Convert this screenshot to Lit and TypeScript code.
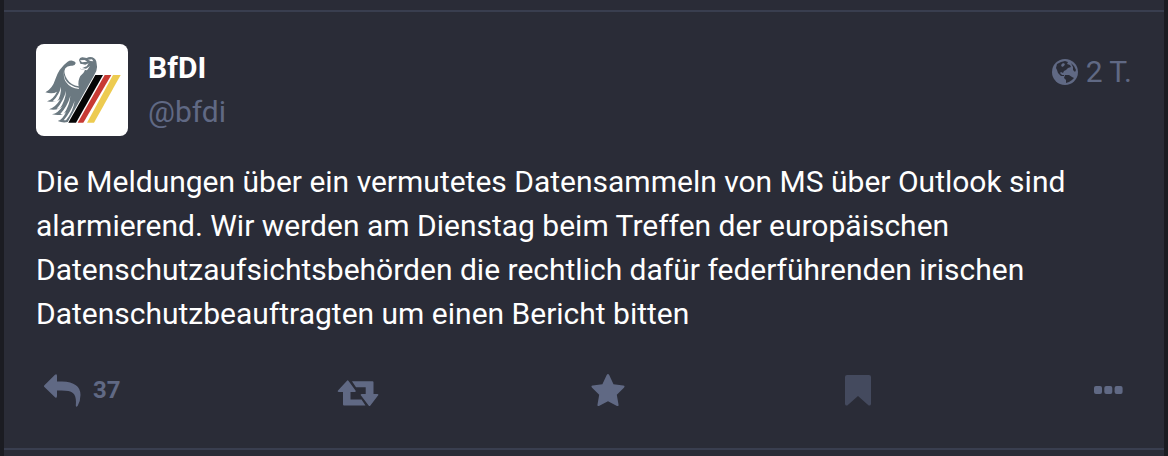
import { LitElement, html, css } from "lit";
import { customElement, property } from "lit/decorators.js";

@customElement("account-avatar")
class AccountAvatar extends LitElement {
  static styles = css`
    :host { display: block; flex: none; width: 92px; height: 92px; border-radius: 8px; overflow: hidden; background: #fff; }
    svg { display: block; width: 100%; height: 100%; }
  `;
  render() {
    return html`<svg viewBox="18 18 276 276" aria-hidden="true">
      <path fill="#6b7981" d="M113 71 Q119 67 127 68 Q137 70 137 76 Q135 84 125 83 Q112 82 106 91 Q99 104 111 123 Q123 142 146 145 Q143 128 151 114 Q161 107 165 97 L152 94 L152 90 L163 87 L165 82 L151 77 L147 66 Q149 57 158 58 L170 60 Q178 55 187 58 Q199 62 200 77 Q203 87 199 99 Q189 119 178 137 L113 252 Q99 256 83 249 Q98 245 108 222 Q94 236 66 229 Q84 226 98 204 Q84 219 57 214 Q77 208 91 184 Q77 195 51 190 Q70 184 81 161 Q68 169 46 163 Q67 153 76 124 Q86 91 113 71Z"/>
      <path fill="#fff" d="M102 98 Q99 124 119 139 Q132 148 146 149 L147 153 Q121 151 108 132 Q99 119 102 98Z M174 65 L186 64 L190 70 L182 69Z M150 67 L164 66 L172 71 L156 73Z M153 78 L166 80 L176 76 L170 85 L156 90 L168 92 L180 84 L171 97 L152 94Z"/>
      <path fill="#fff" d="M93 146 Q88 170 68 190 L80 192 Q94 175 93 146Z M108 158 Q101 188 80 212 L89 212 Q107 187 108 158Z M121 174 Q112 205 91 228 L101 228 Q119 203 121 174Z M134 188 Q124 218 101 247 L108 247 Q130 218 134 188Z"/>
      <path fill="#050505" d="M196 111H219L138 254H115Z"/>
      <path fill="#c83a34" d="M224 111H244L160 254H143Z"/>
      <path fill="#edcb50" d="M249 111H272L192 254H171Z"/>
    </svg>`;
  }
}

@customElement("status-card")
class StatusCard extends LitElement {
  @property() name = "";
  @property() handle = "";
  @property() age = "";
  @property() text = "";
  @property({ type: Number }) replies = 0;

  static styles = css`
    :host { display: block; padding: 32px; border-bottom: 2px solid #393e4f; color: #fff; }
    header { display: flex; align-items: flex-start; gap: 20px; }
    a { color: inherit; text-decoration: none; }
    .names { flex: 1; display: flex; flex-direction: column; padding-top: 2px; line-height: 44px; }
    .name { font-weight: 700; }
    .handle, .time { color: #606984; }
    .time { display: flex; align-items: center; gap: 8px; height: 56px; }
    svg { display: block; fill: currentColor; }
    p { margin: 24px 0 0; line-height: 44px; }
    .actions { display: flex; justify-content: space-between; align-items: center; margin-top: 28px; padding-left: 8px; height: 52px; }
    button { display: flex; align-items: center; justify-content: center; gap: 12px; box-sizing: border-box; width: 48px; margin: 0; padding: 0; border: 0; background: none; color: #606984; font: 700 24px/32px Roboto, sans-serif; cursor: pointer; }
    .reply { width: 88px; justify-content: flex-start; }
    button:disabled { color: #444a5e; cursor: default; }
  `;
  render() {
    return html`<article>
      <header>
        <account-avatar></account-avatar>
        <a class="names" href="#account"><span class="name">${this.name}</span><span class="handle">${this.handle}</span></a>
        <a class="time" href="#status">
          <svg width="26" height="26" viewBox="0 0 26 26" aria-hidden="true">
            <circle cx="13" cy="13" r="13"/>
            <path fill="#2a2c37" d="M5 5 L9 3 L13 2 L16 3 L15 5 L18 6 L19 8 L16 9 L14 11 L12 12 L11 14 L9 13 L8 14 L10 16 L12 16 L12 17 L9 17 L6 14 L5 11 L4 9Z M13 16 L17 16 L20 18 L22 19 L20 21 L17 23 L14 24 L14 21 L12 19Z M19 4 L22 7 L24 11 L23 13 L21 11 L21 8Z"/>
            <path d="M11 4 L13 5 L12 7 L10 8 L9 6Z"/>
          </svg>
          <time>${this.age}</time>
        </a>
      </header>
      <p>${this.text}</p>
      <div class="actions">
        <button class="reply" aria-label="Antworten">
          <svg width="37" height="33" viewBox="0 0 37 33"><path d="M0.4 11.3 11 0.8Q13 -0.6 13 2V7.5H18Q36.5 8 36.5 21Q36.5 27 33.6 32Q32 33.8 31.8 31.5C32.7 20 30 16.4 17.5 16.4H13V22Q13 24.8 11 23.3L0.4 13Q-0.4 12.2 0.4 11.3Z"/></svg>
          <span>${this.replies}</span>
        </button>
        <button aria-label="Teilen">
          <svg width="42" height="32" viewBox="0 -6 42 32"><path d="M10 0.7Q10.7 0 11.4 0.7L18.5 10.4Q19.4 12 17.6 12H13.5V19.5H24.5L28.5 25.4H7Q6 25.4 6 24.4V12H2Q0 12 1 10.4ZM15 1.3H35.5Q36.5 1.3 36.5 2.3V14H40.3Q42 14 41 15.6L33.2 25.8Q32.5 26.6 31.8 25.8L24 15.6Q23 14 24.8 14H28.7V7.3H19Z"/></svg>
        </button>
        <button aria-label="Favorisieren">
          <svg width="34" height="32" viewBox="0 0 34 32"><path d="M15.7 1.1Q17 -1 18.2 1.1L22.5 10.2 32.2 11.6Q34.5 12 32.9 13.8L25.8 20.7 27.5 30.5Q27.7 33 25.5 31.8L17 27.2 8.4 31.8Q6.2 33 6.5 30.5L8.2 20.7 1.1 13.8Q-0.5 12 1.7 11.6L11.4 10.2Z"/></svg>
        </button>
        <button disabled aria-label="Lesezeichen">
          <svg width="26" height="31" viewBox="0 0 26 31"><path d="M2 0H24Q26 0 26 2V29Q25.6 31 23.7 30.4L13 21 2.3 30.4Q0.4 31 0 29V2Q0 0 2 0Z"/></svg>
        </button>
        <button aria-label="Mehr">
          <svg width="29" height="8" viewBox="0 0 29 8"><rect width="8" height="8" rx="2"/><rect x="10.3" width="8" height="8" rx="2"/><rect x="20.6" width="8" height="8" rx="2"/></svg>
        </button>
      </div>
    </article>`;
  }
}

@customElement("app-root")
class AppRoot extends LitElement {
  static styles = css`
    :host { display: block; box-sizing: border-box; min-height: 100vh; padding: 0 4px; background: #1b1c22; font: 400 30px/44px Roboto, sans-serif; }
    main { min-height: 100vh; background: #2a2c37; }
    .previous { height: 10px; border-bottom: 2px solid #393e4f; }
  `;
  render() {
    return html`<main>
      <div class="previous"></div>
      <status-card name="BfDI" handle="@bfdi" age="2 T." replies="37"
        text="Die Meldungen über ein vermutetes Datensammeln von MS über Outlook sind alarmierend. Wir werden am Dienstag beim Treffen der europäischen Datenschutzaufsichtsbehörden die rechtlich dafür federführenden irischen Datenschutzbeauftragten um einen Bericht bitten"></status-card>
    </main>`;
  }
}
